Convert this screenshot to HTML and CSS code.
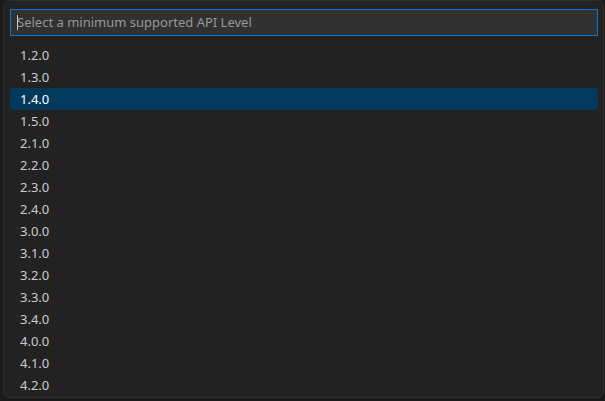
FILE: index.html
```html
<!DOCTYPE html>
<html>
<head>
<meta charset="utf-8">
<link rel="stylesheet" href="styles.css">
</head>
<body>
<div class="quick-input">
  <div class="input-box"><span class="caret"></span><span class="placeholder">Select a minimum supported API Level</span></div>
  <ul class="list">
    <li>1.2.0</li>
    <li>1.3.0</li>
    <li class="selected">1.4.0</li>
    <li>1.5.0</li>
    <li>2.1.0</li>
    <li>2.2.0</li>
    <li>2.3.0</li>
    <li>2.4.0</li>
    <li>3.0.0</li>
    <li>3.1.0</li>
    <li>3.2.0</li>
    <li>3.3.0</li>
    <li>3.4.0</li>
    <li>4.0.0</li>
    <li>4.1.0</li>
    <li>4.2.0</li>
  </ul>
</div>
</body>
</html>
```

FILE: styles.css
```css
html, body {
  margin: 0;
  padding: 0;
  background: #1a1a1a;
  height: 401px;
  overflow: hidden;
}
body {
  font-family: "Noto Sans", "Open Sans", sans-serif;
  font-size: 13px;
  color: #cccccc;
}
.quick-input {
  margin-left: 3px;
  margin-top: 0;
  width: 601px;
  height: 398px;
  background: #222222;
  border: 1px solid #2e2e2e;
  border-radius: 6px;
  box-sizing: border-box;
  padding: 8px 6px 0 6px;
}
.input-box {
  height: 27px;
  box-sizing: border-box;
  border: 1px solid #0078d4;
  background: #313131;
  display: flex;
  align-items: center;
  padding-left: 6px;
  width: 588px;
}
.caret {
  width: 1px;
  height: 15px;
  background: #cccccc;
}
.placeholder {
  color: #989898;
  line-height: 1;
  margin-left: -1px;
}
.list {
  list-style: none;
  margin: 8px 0 0 0;
  padding: 0;
  width: 588px;
}
.list li {
  height: 22px;
  line-height: 22px;
  padding-left: 10px;
  border-radius: 3px;
}
.list li.selected {
  background: #04395e;
  color: #ffffff;
}
```
